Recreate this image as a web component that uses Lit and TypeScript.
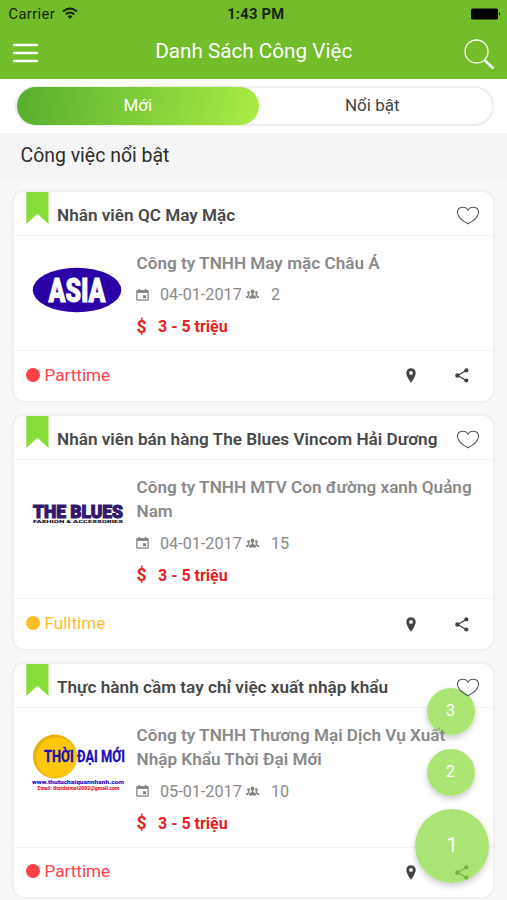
import { LitElement, html, css, svg, nothing } from "lit";
import { customElement, property } from "lit/decorators.js";

interface Job {
  title: string;
  company: string;
  date: string;
  slots: string;
  salary: string;
  kind: "Parttime" | "Fulltime";
  logo: "asia" | "blues" | "thoidai";
}

const JOBS: Job[] = [
  { title: "Nhân viên QC May Mặc", company: "Công ty TNHH May mặc Châu Á", date: "04-01-2017", slots: "2", salary: "3 - 5 triệu", kind: "Parttime", logo: "asia" },
  { title: "Nhân viên bán hàng The Blues Vincom Hải Dương", company: "Công ty TNHH MTV Con đường xanh Quảng Nam", date: "04-01-2017", slots: "15", salary: "3 - 5 triệu", kind: "Fulltime", logo: "blues" },
  { title: "Thực hành cầm tay chỉ việc xuất nhập khẩu", company: "Công ty TNHH Thương Mại Dịch Vụ Xuất Nhập Khẩu Thời Đại Mới", date: "05-01-2017", slots: "10", salary: "3 - 5 triệu", kind: "Parttime", logo: "thoidai" },
];

const fit = "spacingAndGlyphs";

const logos = {
  asia: svg`
    <ellipse cx="46" cy="45" rx="44.3" ry="22.3" fill="#2a00a6"/>
    <text x="17.500" y="57.3" font-size="34" font-weight="900" fill="#fff" stroke="#fff" stroke-width="1" textLength="57" lengthAdjust=${fit}>ASIA</text>`,
  blues: svg`
    <text x="2" y="49" font-size="18.500" font-weight="900" fill="#33186e" stroke="#33186e" stroke-width="1.1" textLength="90" lengthAdjust=${fit}>THE BLUES</text>
    <text x="2" y="53.7" font-size="4.300" font-weight="900" fill="#15101f" textLength="90" lengthAdjust=${fit}>FASHION &amp; ACCESSORIES</text>`,
  thoidai: svg`
    <circle cx="24" cy="39.5" r="22" fill="#e8b010"/>
    <circle cx="25.300" cy="40.5" r="20.300" fill="#fdc70c"/>
    <text x="13" y="45" font-size="16" font-weight="700" fill="#1c10b4" stroke="#1c10b4" stroke-width=".3" textLength="81" lengthAdjust=${fit}>THỜI ĐẠI MỚI</text>
    <text x="1" y="67.3" font-size="5.600" font-weight="900" fill="#1c10c4" textLength="92" lengthAdjust=${fit}>www.thutuchaiquannhanh.com</text>
    <text x="6.500" y="73.4" font-size="4.500" font-weight="900" fill="#e8202c" textLength="82" lengthAdjust=${fit}>Email: thoidaimoi2002@gmail.com</text>`,
};

const calendarIcon = html`<svg class="cal" viewBox="0 0 13 12"><path fill="#888" fill-rule="evenodd" d="M2.500 0h1.500v1h5V0h1.500v1h1q1.300 0 1.300 1.300v8.200q0 1.300-1.300 1.300h-10Q.2 11.800.2 10.500V2.300Q.2 1 1.500 1h1zM1.500 4v6.200q0 .4.400.4h9.200q.4 0 .4-.4V4zM7 6.300h3.200v3H7z"/></svg>`;
const groupIcon = html`<svg class="grp" viewBox="0 0 13 11"><g fill="#858585"><circle cx="6.500" cy="2.600" r="2"/><path d="M5.500 4h2v2.200q2.500.5 2.500 2v1.300H3V8.200q0-1.500 2.500-2z"/><circle cx="2.600" cy="3.600" r="1.400"/><path d="M1.900 4.500h1.500v2q-1 .6-1 1.800v.7H0V8q0-1 1.900-1.500zM11.100 4.500H9.600v2q1 .6 1 1.800v.7H13V8q0-1-1.900-1.500z"/><circle cx="10.400" cy="3.600" r="1.400"/></g></svg>`;
const heartIcon = html`<svg class="heart" viewBox="0 0 24 19"><path fill="none" stroke="#5a5a5a" stroke-width="1.150" stroke-linejoin="round" d="M12 4.300C10.300.2 1.500-.4 1.500 6.300c0 4.800 5.200 8.800 10.500 11.500 5.300-2.700 10.500-6.700 10.500-11.500C22.500-.4 13.700.2 12 4.300z"/></svg>`;
const pinIcon = html`<svg class="pin" viewBox="0 0 10 15"><path fill="#444" fill-rule="evenodd" d="M5 .2a4.700 4.700 0 0 1 4.700 4.700C9.700 8.400 5 14.700 5 14.700S.3 8.400.3 4.900A4.700 4.700 0 0 1 5 .2zm0 2.800a1.900 1.900 0 1 0 0 3.800 1.900 1.900 0 0 0 0-3.800z"/></svg>`;
const shareIcon = html`<svg class="share" viewBox="0 0 14 15"><path d="M11.200 2.400 2.700 7.500l8.500 5" fill="none" stroke="#444" stroke-width="1.200"/><g fill="#444"><circle cx="11.300" cy="2.400" r="2.100"/><circle cx="2.400" cy="7.500" r="2.200"/><circle cx="11.300" cy="12.500" r="2.100"/></g></svg>`;

@customElement("job-card")
class JobCard extends LitElement {
  @property({ attribute: false }) job?: Job;

  static styles = css`
    :host { display: block; box-sizing: border-box; background: #fff; border: 1px solid #efefef; border-radius: 11px; box-shadow: 0 0 3px rgba(0, 0, 0, 0.06); color: #8a8a8a; }
    svg { display: block; flex: none; }
    .head { display: flex; height: 44px; box-sizing: border-box; border-bottom: 1px solid #f3f3f3; padding-left: 12px; }
    .ribbon { width: 23px; height: 33px; }
    .title { flex: 1; margin-left: 8px; font-size: 17.170px; font-weight: 600; line-height: 47px; color: #484848; white-space: nowrap; }
    .heart { position: relative; z-index: 2; width: 24px; height: 19px; margin: 14px 13px 0 0; }
    .main { display: flex; padding: 14px 8px 11px 17px; }
    .logo { width: 97px; height: 90px; margin: -5px 9px 0 -.5px; font-family: Roboto, sans-serif; overflow: visible; }
    .name { position: relative; z-index: 2; margin-top: .75px; font-size: 17.150px; line-height: 24.500px; font-weight: 600; }
    .info { flex: 1; min-width: 0; }
    .meta { display: flex; align-items: center; height: 24px; margin-top: 7.500px; font-size: 16.200px; }
    .cal { width: 13px; height: 12px; margin-left: -.5px; }
    .date { width: 81px; margin-left: 11px; white-space: nowrap; }
    .grp { width: 13px; height: 11px; margin-left: 5px; }
    .slots { margin-left: 12px; }
    .pay { display: flex; height: 24px; align-items: center; margin-top: 8px; margin-bottom: .25px; color: #e32222; font-size: 16px; font-weight: 700; }
    .dollar { width: 21.500px; font-size: 17.500px; }
    .foot { display: flex; align-items: center; height: 50.500px; box-sizing: border-box; border-top: 1px solid #f3f3f3; padding: 0 24px 2px 12px; font-size: 17.100px; }
    .dot { width: 14px; height: 14px; border-radius: 50%; background: currentColor; margin-right: 4.500px; }
    .kind { flex: 1; display: flex; align-items: center; color: #fc4248; }
    .kind.full { color: #fdbd28; }
    .pin { width: 10px; height: 15px; margin: 2px 39px 0 0; }
    .share { width: 14px; height: 15px; margin-top: 2px; }
  `;

  render() {
    const j = this.job;
    if (!j) return nothing;
    return html`
      <div class="head">
        <svg class="ribbon" viewBox="0 0 23 33"><path fill="#86dc38" d="M.3 0h22.200v32L11.400 21.800.3 32z"/></svg>
        <div class="title">${j.title}</div>
        ${heartIcon}
      </div>
      <div class="main">
        <svg class="logo" viewBox="0 0 97 90">${logos[j.logo]}</svg>
        <div class="info">
          <div class="name">${j.company}</div>
          <div class="meta">${calendarIcon}<span class="date">${j.date}</span>${groupIcon}<span class="slots">${j.slots}</span></div>
          <div class="pay"><span class="dollar">$</span><span>${j.salary}</span></div>
        </div>
      </div>
      <div class="foot">
        <div class="kind ${j.kind === "Fulltime" ? "full" : ""}"><span class="dot"></span>${j.kind}</div>
        ${pinIcon}${shareIcon}
      </div>`;
  }
}

@customElement("app-root")
class AppRoot extends LitElement {
  static styles = css`
    :host { display: block; position: relative; width: 507px; height: 900px; overflow: hidden; background: #f8f8f8; font-family: Roboto, sans-serif; }
    svg { display: block; }
    .top { height: 79px; background: #73bc2a; }
    .status { display: grid; grid-template-columns: 1fr auto 1fr; align-items: center; height: 28px; padding: 0 6px 0 8.500px; font-size: 14.700px; color: #16250a; }
    .carrier { display: flex; align-items: center; gap: 7px; letter-spacing: .4px; }
    .wifi { width: 16px; height: 12px; margin-top: -2px; }
    .time { font-weight: 700; letter-spacing: .25px; margin-left: 2px; }
    .battery { width: 31px; height: 12px; justify-self: end; margin-top: -1px; }
    .nav { display: flex; align-items: center; justify-content: space-between; height: 51px; padding: 0 11.500px 0 12px; color: #fff; }
    .menu { width: 27px; height: 20px; margin-top: -2px; }
    .heading { font-size: 20.700px; margin: -5px 0 0 5px; }
    .search { width: 32px; height: 32px; }
    .tabs { background: #fff; height: 54px; box-sizing: border-box; padding: 7px 13.500px 7px 14.500px; }
    .pill { display: flex; height: 40px; box-sizing: border-box; border: 2px solid #ececec; border-radius: 20px; font-size: 17px; line-height: 35px; text-align: center; color: #444; }
    .tab { flex: 1; padding-right: 6px; }
    .tab.on { flex: none; width: 242.500px; box-sizing: border-box; padding: 0; height: 38px; line-height: 37px; margin-top: -1px; border-radius: 19px; color: #fff; background: linear-gradient(100deg, #57ae2c, #a9ec45); }
    .section { height: 47px; box-sizing: border-box; padding-left: 20.500px; font-size: 19.450px; line-height: 45px; color: #2c2c2c; background: #f5f5f5; }
    .list { display: flex; flex-direction: column; gap: 13.250px; margin-top: 11px; padding: 0 13px; }
    .fabs { position: absolute; z-index: 1; right: 18px; top: 687.500px; width: 74px; display: flex; flex-direction: column; align-items: center; }
    .fab { width: 48px; height: 47px; line-height: 46px; border-radius: 50%; margin: 0 3px 14px 0; background: rgba(168, 229, 112, .97); box-shadow: 0 3px 6px rgba(0, 0, 0, .2); color: #fff; font-size: 16px; text-align: center; }
    .fab.big { width: 74px; height: 74px; line-height: 72px; font-size: 20px; margin: -1px 0 0; background: rgba(136, 218, 64, .72); }
  `;

  render() {
    return html`
      <div class="top">
        <div class="status">
          <div class="carrier">Carrier
            <svg class="wifi" viewBox="0 0 16 12"><g fill="none" stroke="#16250a" stroke-width="2"><path d="M1 4.500q7-6 14 0M3.700 7.300q4.300-3.600 8.600 0"/></g><path d="M5.500 9.200q2.500-1.900 5 0L8 12z" fill="#16250a"/></svg>
          </div>
          <div class="time">1:43 PM</div>
          <svg class="battery" viewBox="0 0 31 12"><rect x="1" y=".5" width="27" height="11" rx="1.500"/><path d="M29 4q2 2 0 4z"/></svg>
        </div>
        <div class="nav">
          <svg class="menu" viewBox="0 0 27 20"><path d="M2 2h23M2 10h23M2 18h23" stroke="#fff" stroke-width="2.400" stroke-linecap="round"/></svg>
          <div class="heading">Danh Sách Công Việc</div>
          <svg class="search" viewBox="0 0 32 32"><g fill="none" stroke="#fff"><circle cx="13.500" cy="13.500" r="11.500" stroke-width="1.300"/><path d="m21.500 22 9 8.500" stroke-width="2.600"/></g></svg>
        </div>
      </div>
      <div class="tabs"><div class="pill"><div class="tab on">Mới</div><div class="tab">Nổi bật</div></div></div>
      <div class="section">Công việc nổi bật</div>
      <div class="list">${JOBS.map((j) => html`<job-card .job=${j}></job-card>`)}</div>
      <div class="fabs"><div class="fab">3</div><div class="fab">2</div><div class="fab big">1</div></div>`;
  }
}
